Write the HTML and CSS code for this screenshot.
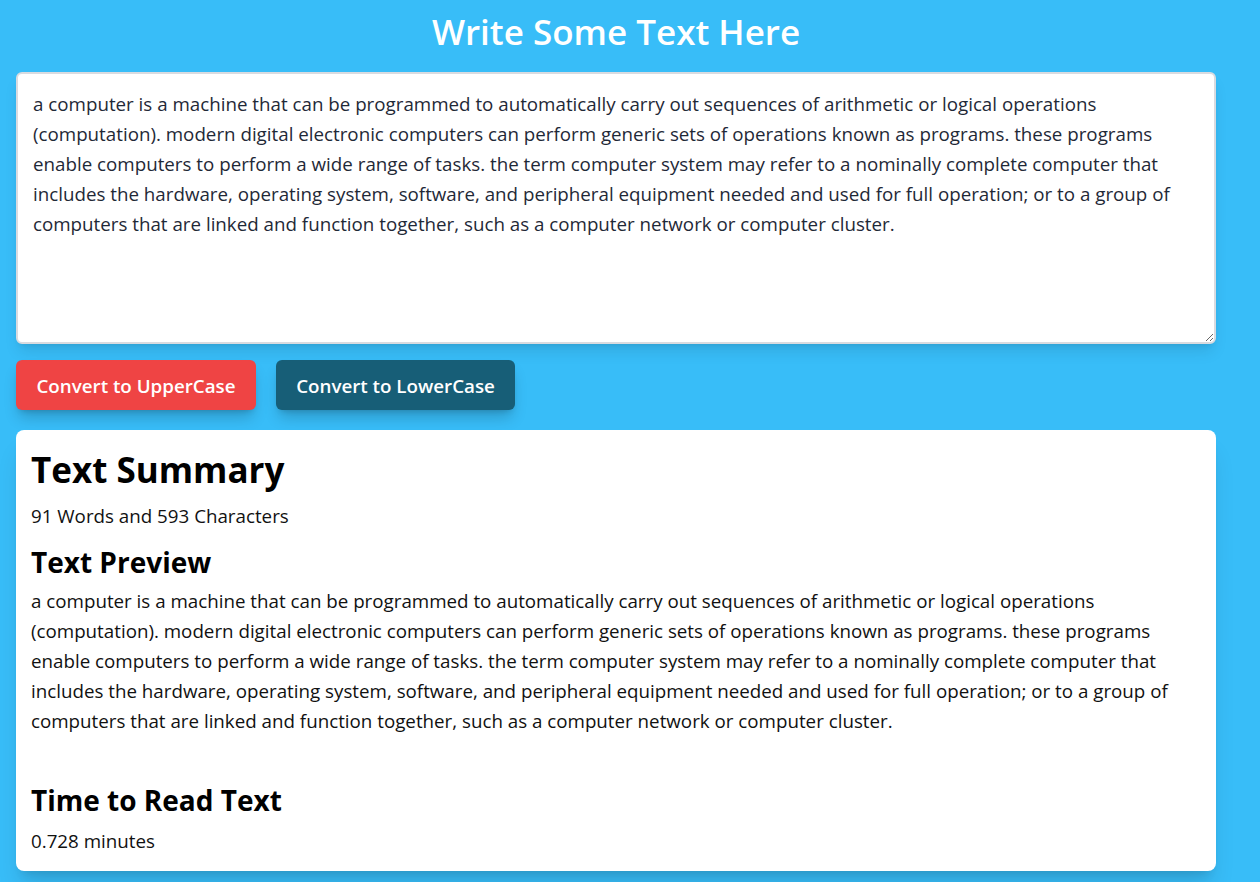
FILE: index.html
```html
<!DOCTYPE html>
<html lang="en">
<head>
<meta charset="utf-8">
<title>Text Utils</title>
<link rel="stylesheet" href="styles.css">
</head>
<body>
<div class="container">
  <h1 class="title">Write Some Text Here</h1>
  <textarea class="editor">a computer is a machine that can be programmed to automatically carry out sequences of arithmetic or logical operations (computation). modern digital electronic computers can perform generic sets of operations known as programs. these programs enable computers to perform a wide range of tasks. the term computer system may refer to a nominally complete computer that includes the hardware, operating system, software, and peripheral equipment needed and used for full operation; or to a group of computers that are linked and function together, such as a computer network or computer cluster.</textarea>
  <div class="actions">
    <button class="btn btn-upper">Convert to UpperCase</button>
    <button class="btn btn-lower">Convert to LowerCase</button>
  </div>
  <div class="card">
    <h2 class="summary-title">Text Summary</h2>
    <p class="stat">91 Words and 593 Characters</p>
    <h3 class="section-title">Text Preview</h3>
    <p class="preview">a computer is a machine that can be programmed to automatically carry out sequences of arithmetic or logical operations (computation). modern digital electronic computers can perform generic sets of operations known as programs. these programs enable computers to perform a wide range of tasks. the term computer system may refer to a nominally complete computer that includes the hardware, operating system, software, and peripheral equipment needed and used for full operation; or to a group of computers that are linked and function together, such as a computer network or computer cluster.</p>
    <h3 class="section-title read-title">Time to Read Text</h3>
    <p class="stat minutes">0.728 minutes</p>
  </div>
</div>
</body>
</html>
```

FILE: styles.css
```css
html, body {
  margin: 0;
  padding: 0;
}
body {
  background: #38bdf8;
  font-family: "Open Sans", "Noto Sans", sans-serif;
  min-height: 882px;
}
.container {
  width: 1200px;
  margin-left: 16px;
  padding-top: 11px;
  display: flex;
  flex-direction: column;
}
.title {
  margin: 0;
  text-align: center;
  color: #ffffff;
  font-size: 35px;
  line-height: 41px;
  font-weight: 600;
}
.editor {
  margin-top: 20px;
  box-sizing: border-box;
  width: 1200px;
  height: 272px;
  padding: 15px 15px 14px;
  border: 2px solid #d9dbe0;
  border-radius: 6px;
  background: #ffffff;
  color: #1f2937;
  font-family: "Open Sans", "Noto Sans", sans-serif;
  font-size: 18.75px;
  line-height: 30px;
  box-shadow: 0 10px 15px -3px rgba(0,0,0,0.1), 0 4px 6px -4px rgba(0,0,0,0.1);
  outline: none;
}
.actions {
  margin-top: 16px;
  display: flex;
  gap: 20px;
}
.btn {
  height: 50px;
  padding: 0 16px;
  border: none;
  border-radius: 6px;
  color: #ffffff;
  font-family: "Open Sans", "Noto Sans", sans-serif;
  font-size: 18.75px;
  font-weight: 600;
  box-shadow: 0 10px 15px -3px rgba(0,0,0,0.2), 0 4px 6px -4px rgba(0,0,0,0.2);
  cursor: pointer;
}
.btn-upper {
  width: 240px;
  background: #ef4444;
}
.btn-lower {
  width: 239px;
  background: #175e77;
}
.card {
  margin-top: 20px;
  background: #ffffff;
  border-radius: 8px;
  padding: 20px 15px 15px;
  color: #000000;
  box-shadow: 0 20px 25px -5px rgba(0,0,0,0.12), 0 8px 10px -6px rgba(0,0,0,0.12);
}
.summary-title {
  margin: 0;
  font-size: 35px;
  line-height: 40px;
  font-weight: 700;
}
.stat {
  margin: 11px 0 0;
  font-size: 18.75px;
  line-height: 30px;
  color: #111111;
}
.section-title {
  margin: 13px 0 0;
  font-size: 28px;
  line-height: 36px;
  font-weight: 700;
}
.preview {
  margin: 6px 0 0;
  font-size: 18.75px;
  line-height: 30px;
  color: #111111;
}
.read-title {
  margin-top: 46px;
}
.minutes {
  margin-top: 8px;
}
```
